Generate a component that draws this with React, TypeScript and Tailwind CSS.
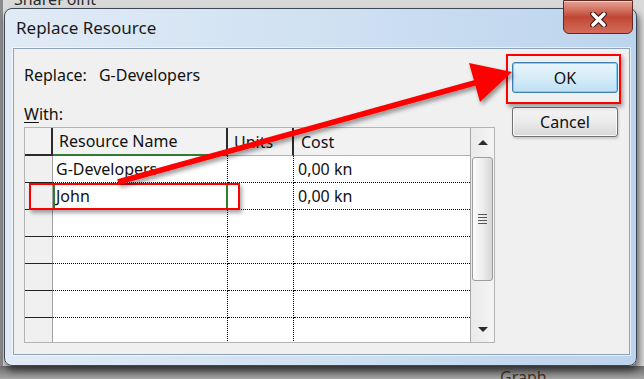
import React from 'react';

const rows = [
  { name: 'G-Developers', cost: '0,00 kn' },
  { name: 'John', cost: '0,00 kn', active: true },
  { name: '', cost: '' },
  { name: '', cost: '' },
  { name: '', cost: '' },
  { name: '', cost: '' },
  { name: '', cost: '' },
];

function CloseButton() {
  return (
    <div className="-mt-[9px] mr-[3px] w-[70px] h-[34px] rounded-b-[6px] border border-[#5e2a22] bg-gradient-to-b from-[#e3a295] via-[#c24634] to-[#d46c5b] flex items-center justify-center shadow-[inset_0_1px_0_rgba(255,255,255,0.5)]">
      <svg width="17" height="15" viewBox="0 0 17 15" className="mt-[4px]">
        <path d="M3 2 L14 13 M14 2 L3 13" stroke="#3a1a16" strokeWidth="5.6" strokeLinecap="round" />
        <path d="M3 2 L14 13 M14 2 L3 13" stroke="#ffffff" strokeWidth="3.4" strokeLinecap="round" />
      </svg>
    </div>
  );
}

function ScrollBar() {
  return (
    <div className="w-[24px] h-full flex flex-col border-l border-l-[#a8a8a8] bg-gradient-to-r from-[#eaeaea] to-[#f4f4f4]">
      <div className="h-[28px] flex items-center justify-center">
        <div className="w-0 h-0 border-l-[5px] border-r-[5px] border-b-[5px] border-l-transparent border-r-transparent border-b-[#2b2b2b]" />
      </div>
      <div className="mt-[1px] mx-[1px] h-[124px] rounded-[3px] border border-[#9c9c9c] bg-gradient-to-r from-[#fbfbfb] via-[#eeeeee] to-[#d6d6d6] flex items-center justify-center">
        <div className="flex flex-col gap-[2px]">
          <div className="w-[9px] h-[1px] bg-[#555]" />
          <div className="w-[9px] h-[1px] bg-[#555]" />
          <div className="w-[9px] h-[1px] bg-[#555]" />
          <div className="w-[9px] h-[1px] bg-[#555]" />
        </div>
      </div>
      <div className="flex-1" />
      <div className="h-[26px] flex items-center justify-center">
        <div className="w-0 h-0 border-l-[5px] border-r-[5px] border-t-[5px] border-l-transparent border-r-transparent border-t-[#2b2b2b]" />
      </div>
    </div>
  );
}

function ResourceGrid() {
  return (
    <div className="mt-[3px] w-[471px] h-[216px] border border-[#b4b4b4] flex overflow-hidden bg-white">
      <div className="w-[445px] flex flex-col">
        <div className="h-[28px] flex shrink-0 bg-[#f2f2f2] text-[16px] text-[#111]">
          <div className="w-[28px] border-r-2 border-b-2 border-[#2a2a2a]" />
          <div className="w-[175px] border-r-2 border-r-[#2a2a2a] border-b-2 border-b-[#2e7d32] pl-[6px] flex items-center">Resource Name</div>
          <div className="w-[66px] border-r-2 border-r-[#2a2a2a] border-b border-b-[#b0b0b0] pl-[6px] flex items-center">Units</div>
          <div className="w-[176px] border-b border-b-[#b0b0b0] pl-[7px] flex items-center">Cost</div>
        </div>
        {rows.map((row, i) => (
          <div key={i} className="h-[27px] flex shrink-0 text-[16px] text-[#111]">
            <div className="w-[28px] bg-[#f0f0f0] border-r border-r-[#a0a0a0] border-b border-b-[#222]" />
            <div
              className={`w-[175px] border-b border-dotted border-b-[#000] flex items-center ${
                row.active
                  ? 'pl-[1px] border-l-2 border-r-2 border-l-[#2e7d32] border-r-[#2e7d32] border-solid'
                  : 'pl-[3px] border-r border-r-[#000]'
              }`}
            >
              {row.name}
            </div>
            <div className="w-[66px] border-r border-b border-dotted border-[#000]" />
            <div className="w-[176px] border-b border-dotted border-b-[#000] pl-[4px] flex items-center">
              {row.cost}
            </div>
          </div>
        ))}
      </div>
      <ScrollBar />
    </div>
  );
}

export default function App() {
  return (
    <div className="relative w-[644px] h-[379px] overflow-hidden bg-[#d9d9d9] font-['Noto_Sans',sans-serif]">
      {/* desktop behind the dialog */}
      <div className="absolute left-[14px] -top-[13px] text-[16px] text-[#2b2b2b]">SharePoint</div>
      <div className="absolute left-[602px] top-0 w-[1px] h-[10px] bg-[#555]" />
      <div className="absolute left-[609px] top-0 w-[1px] h-[10px] bg-[#555]" />
      <div className="absolute left-0 top-0 w-[3px] h-[379px] bg-[#8a8a8a]" />
      <div className="absolute left-0 bottom-0 w-[644px] h-[13px] bg-gradient-to-b from-[#6e6e6e] to-[#a5a5a5] flex items-end">
        <span className="ml-[500px] -mb-[10px] text-[16px] text-[#4a3020]">Graph</span>
      </div>

      <div className="absolute left-[4px] top-[8px] w-[633px] h-[358px] flex flex-col rounded-[8px] border border-[#3d4856] bg-gradient-to-r from-[#e1ebf6] via-[#d0e1f2] to-[#bcd4ed] shadow-[2px_5px_7px_rgba(0,0,0,0.55)]">
        <div className="h-[39px] flex justify-between shrink-0">
          <span className="pl-[11px] pt-[6px] text-[17px] text-[#1a1a1a]">Replace Resource</span>
          <CloseButton />
        </div>
        <div className="flex-1 ml-[8px] mr-[6px] mb-[10px] border border-[#8ea3b9] bg-[#f0f0f0] flex shadow-[0_0_0_1px_rgba(255,255,255,0.6)]">
          <div className="pl-[10px] pt-[16px] flex flex-col">
            <div className="h-[20px] flex items-center text-[16px] text-[#111]">
              <span>Replace:</span>
              <span className="ml-[12px]">G-Developers</span>
            </div>
            <div className="mt-[19px] h-[20px] flex items-center text-[16px] text-[#111]">
              <span className="underline underline-offset-2">W</span>ith:
            </div>
            <ResourceGrid />
          </div>
          <div className="ml-[17px] pt-[13px] flex flex-col">
            <button className="w-[106px] h-[31px] rounded-[3px] border border-[#3c7fb1] bg-gradient-to-b from-[#e9f5fc] via-[#d6ecf8] to-[#bfe0f3] shadow-[inset_0_0_0_1px_#7fd0f5] text-[16px] text-[#111]">
              OK
            </button>
            <button className="mt-[14px] w-[106px] h-[30px] rounded-[3px] border border-[#707070] bg-gradient-to-b from-[#f4f4f4] via-[#ebebeb] to-[#d8d8d8] shadow-[inset_0_0_0_1px_rgba(255,255,255,0.8),1px_2px_2px_rgba(0,0,0,0.15)] text-[16px] text-[#111]">
              Cancel
            </button>
          </div>
        </div>
      </div>

      {/* annotations */}
      <div className="absolute left-[29px] top-[183px] w-[211px] h-[27px] border-2 border-[#ff0000] shadow-[2px_3px_4px_rgba(0,0,0,0.35)]" />
      <div className="absolute left-[506px] top-[54px] w-[115px] h-[50px] border-2 border-[#ff0000] shadow-[2px_3px_4px_rgba(0,0,0,0.35)]" />
      <svg className="absolute left-0 top-0 pointer-events-none" width="644" height="379">
        <defs>
          <filter id="sh" x="-10%" y="-10%" width="130%" height="140%">
            <feDropShadow dx="2" dy="3" stdDeviation="2" floodColor="#000" floodOpacity="0.4" />
          </filter>
        </defs>
        <g filter="url(#sh)">
          <line x1="118" y1="182" x2="478" y2="82" stroke="#ff0000" strokeWidth="5.5" />
          <polygon points="512,72 469,63 480,102" fill="#ff0000" />
        </g>
      </svg>
    </div>
  );
}
